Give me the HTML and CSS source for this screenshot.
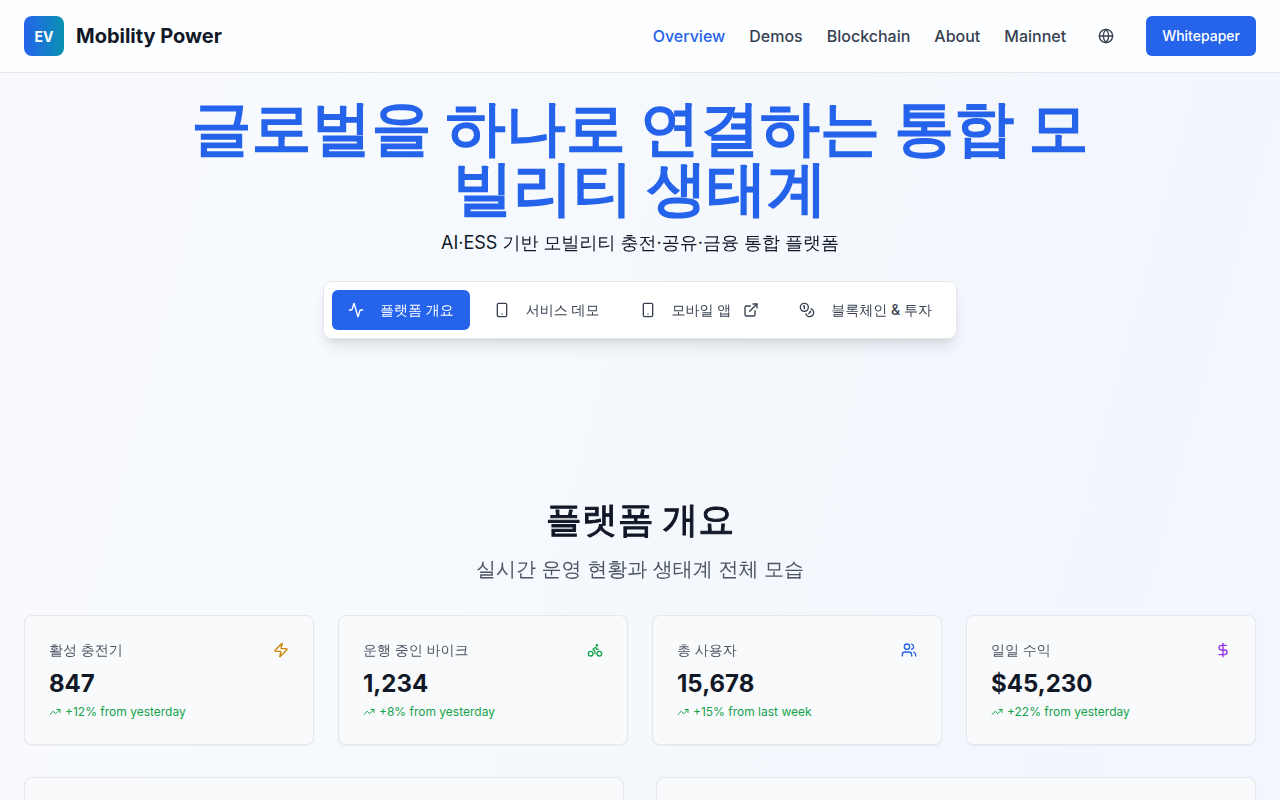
FILE: index.html
```html
<!DOCTYPE html>
<html lang="ko">
<head>
  <meta charset="UTF-8">
  <meta name="viewport" content="width=device-width, initial-scale=1.0">
  <title>Mobility Power</title>
  <link rel="stylesheet" href="styles.css">
</head>
<body>
  <!-- shared icons -->
  <svg class="sprite" aria-hidden="true">
    <symbol id="icon-phone" viewBox="0 0 24 24">
      <rect width="14" height="20" x="5" y="2" rx="2" ry="2"/>
      <path d="M12 18h.01"/>
    </symbol>
    <symbol id="icon-trend" viewBox="0 0 24 24">
      <polyline points="22 7 13.5 15.5 8.5 10.5 2 17"/>
      <polyline points="16 7 22 7 22 13"/>
    </symbol>
  </svg>

  <header class="header">
    <a href="#" class="brand">
      <span class="brand-logo">EV</span>
      <span class="brand-name">Mobility Power</span>
    </a>
    <nav class="nav">
      <a href="#overview" class="nav-link active">Overview</a>
      <a href="#demos" class="nav-link">Demos</a>
      <a href="#blockchain" class="nav-link">Blockchain</a>
      <a href="#about" class="nav-link">About</a>
      <a href="#mainnet" class="nav-link">Mainnet</a>
      <button type="button" class="btn-lang" aria-label="Language">
        <svg class="icon" viewBox="0 0 24 24">
          <circle cx="12" cy="12" r="10"/>
          <path d="M12 2a14.5 14.5 0 0 0 0 20 14.5 14.5 0 0 0 0-20"/>
          <path d="M2 12h20"/>
        </svg>
      </button>
      <button type="button" class="btn btn-primary">Whitepaper</button>
    </nav>
  </header>

  <main>
    <section class="hero">
      <h1>글로벌을 하나로 연결하는 통합 모빌리티 생태계</h1>
      <p class="hero-text">AI·ESS 기반 모빌리티 충전·공유·금융 통합 플랫폼</p>
      <div class="tabs">
        <button type="button" class="btn tab btn-primary">
          <svg class="icon" viewBox="0 0 24 24">
            <path d="M22 12h-2.48a2 2 0 0 0-1.93 1.46l-2.35 8.36a.25.25 0 0 1-.48 0L9.24 2.18a.25.25 0 0 0-.48 0l-2.35 8.36A2 2 0 0 1 4.49 12H2"/>
          </svg>
          플랫폼 개요
        </button>
        <button type="button" class="btn tab">
          <svg class="icon"><use href="#icon-phone"/></svg>
          서비스 데모
        </button>
        <button type="button" class="btn tab">
          <svg class="icon"><use href="#icon-phone"/></svg>
          <span class="tab-external">모바일 앱
            <svg class="icon" viewBox="0 0 24 24">
              <path d="M15 3h6v6"/>
              <path d="M10 14 21 3"/>
              <path d="M18 13v6a2 2 0 0 1-2 2H5a2 2 0 0 1-2-2V8a2 2 0 0 1 2-2h6"/>
            </svg>
          </span>
        </button>
        <button type="button" class="btn tab">
          <svg class="icon" viewBox="0 0 24 24">
            <circle cx="8" cy="8" r="6"/>
            <path d="M18.09 10.37A6 6 0 1 1 10.34 18"/>
            <path d="M7 6h1v4"/>
            <path d="m16.71 13.88.7.71-2.82 2.82"/>
          </svg>
          블록체인 &amp; 투자
        </button>
      </div>
    </section>

    <section class="overview" id="overview">
      <h2>플랫폼 개요</h2>
      <p class="overview-text">실시간 운영 현황과 생태계 전체 모습</p>

      <div class="stats">
        <div class="card stat">
          <div class="stat-head">
            <h3>활성 충전기</h3>
            <svg class="icon yellow" viewBox="0 0 24 24">
              <path d="M4 14a1 1 0 0 1-.78-1.63l9.9-10.2a.5.5 0 0 1 .86.46l-1.92 6.02A1 1 0 0 0 13 10h7a1 1 0 0 1 .78 1.63l-9.9 10.2a.5.5 0 0 1-.86-.46l1.92-6.02A1 1 0 0 0 11 14z"/>
            </svg>
          </div>
          <div class="stat-value">847</div>
          <p class="stat-trend"><svg class="icon-small"><use href="#icon-trend"/></svg>+12% from yesterday</p>
        </div>
        <div class="card stat">
          <div class="stat-head">
            <h3>운행 중인 바이크</h3>
            <svg class="icon green" viewBox="0 0 24 24">
              <circle cx="18.5" cy="17.5" r="3.5"/>
              <circle cx="5.5" cy="17.5" r="3.5"/>
              <circle cx="15" cy="5" r="1"/>
              <path d="M12 17.5V14l-3-3 4-3 2 3h2"/>
            </svg>
          </div>
          <div class="stat-value">1,234</div>
          <p class="stat-trend"><svg class="icon-small"><use href="#icon-trend"/></svg>+8% from yesterday</p>
        </div>
        <div class="card stat">
          <div class="stat-head">
            <h3>총 사용자</h3>
            <svg class="icon blue" viewBox="0 0 24 24">
              <path d="M16 21v-2a4 4 0 0 0-4-4H6a4 4 0 0 0-4 4v2"/>
              <circle cx="9" cy="7" r="4"/>
              <path d="M22 21v-2a4 4 0 0 0-3-3.87"/>
              <path d="M16 3.13a4 4 0 0 1 0 7.75"/>
            </svg>
          </div>
          <div class="stat-value">15,678</div>
          <p class="stat-trend"><svg class="icon-small"><use href="#icon-trend"/></svg>+15% from last week</p>
        </div>
        <div class="card stat">
          <div class="stat-head">
            <h3>일일 수익</h3>
            <svg class="icon purple" viewBox="0 0 24 24">
              <path d="M12 2v20"/>
              <path d="M17 5H9.5a3.5 3.5 0 0 0 0 7h5a3.5 3.5 0 0 1 0 7H6"/>
            </svg>
          </div>
          <div class="stat-value">$45,230</div>
          <p class="stat-trend"><svg class="icon-small"><use href="#icon-trend"/></svg>+22% from yesterday</p>
        </div>
      </div>

      <div class="panels">
        <div class="card panel"></div>
        <div class="card panel"></div>
      </div>
    </section>
  </main>
</body>
</html>
```

FILE: styles.css
```css
:root {
  --primary: #2563eb;
  --text: #111827;
  --muted: #4b5563;
  --slate: #374151;
  --border: #e5e7eb;
}

* {
  box-sizing: border-box;
}

body {
  margin: 0;
  color: var(--text);
  font-family: Inter, "WenQuanYi Zen Hei", "Noto Sans CJK KR", sans-serif;
  background: linear-gradient(105deg, #fafafe, #f6fafe 30%, #f3f6fc 75%, #f2f6ff);
}

h1, h2, h3, p {
  margin: 0;
}

.sprite {
  display: none;
}

.icon, .icon-small {
  width: 16px;
  height: 16px;
  flex-shrink: 0;
  fill: none;
  stroke: currentColor;
  stroke-width: 2;
  stroke-linecap: round;
  stroke-linejoin: round;
}

.icon-small {
  width: 12px;
  height: 12px;
}

.header {
  display: flex;
  align-items: center;
  justify-content: space-between;
  padding: 16px 24px;
  background-color: #fdfeff;
  border-bottom: 1px solid var(--border);
}

.brand {
  display: flex;
  align-items: center;
  gap: 12px;
  color: var(--text);
  text-decoration: none;
}

.brand-logo {
  display: flex;
  align-items: center;
  justify-content: center;
  width: 40px;
  height: 40px;
  border-radius: 8px;
  background: linear-gradient(to right, #2563eb, #0891b2);
  color: white;
  font-size: 14px;
  font-weight: 700;
}

.brand-name {
  font-size: 20px;
  line-height: 28px;
  font-weight: 700;
}

.nav {
  display: flex;
  align-items: center;
  gap: 24px;
}

.nav-link {
  color: var(--slate);
  font-size: 16px;
  line-height: 24px;
  font-weight: 500;
  text-decoration: none;
}

.nav-link.active {
  color: var(--primary);
}

.btn-lang {
  display: flex;
  padding: 8px;
  border: none;
  background: none;
  color: var(--slate);
  cursor: pointer;
}

.btn {
  display: flex;
  align-items: center;
  height: 40px;
  padding: 0 16px;
  border: none;
  border-radius: 6px;
  background: none;
  color: var(--slate);
  font-family: inherit;
  font-size: 14px;
  line-height: 20px;
  font-weight: 500;
  white-space: nowrap;
  cursor: pointer;
}

.btn-primary {
  background-color: var(--primary);
  color: white;
}

.hero {
  display: flex;
  flex-direction: column;
  align-items: center;
  padding: 24px 24px 160px;
  text-align: center;
}

/* the Korean font has no bold cut, so the headings get a stroke */
.hero h1 {
  max-width: 900px;
  color: var(--primary);
  font-size: 60px;
  line-height: 60px;
  font-weight: 700;
  -webkit-text-stroke: 2px currentColor;
}

.hero-text {
  margin-top: 12px;
  font-size: 18px;
  line-height: 28px;
}

.tabs {
  display: flex;
  gap: 8px;
  margin-top: 24px;
  padding: 8px;
  background-color: white;
  border: 1px solid var(--border);
  border-radius: 8px;
  box-shadow: 0 10px 15px -3px rgba(0, 0, 0, 0.1), 0 4px 6px -4px rgba(0, 0, 0, 0.1);
}

.tab {
  gap: 16px;
}

.tab-external {
  display: flex;
  align-items: center;
  gap: 12px;
}

.overview {
  padding: 0 24px 32px;
}

.overview h2 {
  font-size: 36px;
  line-height: 40px;
  font-weight: 700;
  text-align: center;
  -webkit-text-stroke: 1px currentColor;
}

.overview-text {
  margin-top: 16px;
  color: var(--muted);
  font-size: 20px;
  line-height: 28px;
  text-align: center;
}

.stats {
  display: grid;
  grid-template-columns: repeat(4, 1fr);
  gap: 24px;
  margin-top: 32px;
}

.card {
  background-color: #f9fafc;
  border: 1px solid var(--border);
  border-radius: 8px;
  box-shadow: 0 1px 2px rgba(0, 0, 0, 0.05);
}

.stat {
  padding: 24px;
}

.stat-head {
  display: flex;
  align-items: center;
  justify-content: space-between;
}

.stat-head h3 {
  color: var(--muted);
  font-size: 14px;
  line-height: 20px;
  font-weight: 500;
}

.stat-value {
  margin-top: 8px;
  font-size: 24px;
  line-height: 32px;
  font-weight: 700;
}

.stat-trend {
  display: flex;
  align-items: center;
  gap: 4px;
  margin-top: 4px;
  color: #16a34a;
  font-size: 12px;
  line-height: 16px;
}

.yellow {
  color: #ca8a04;
}

.green {
  color: #16a34a;
}

.blue {
  color: #2563eb;
}

.purple {
  color: #9333ea;
}

.panels {
  display: grid;
  grid-template-columns: repeat(2, 1fr);
  gap: 32px;
  margin-top: 32px;
}

.panel {
  min-height: 320px;
}
```
